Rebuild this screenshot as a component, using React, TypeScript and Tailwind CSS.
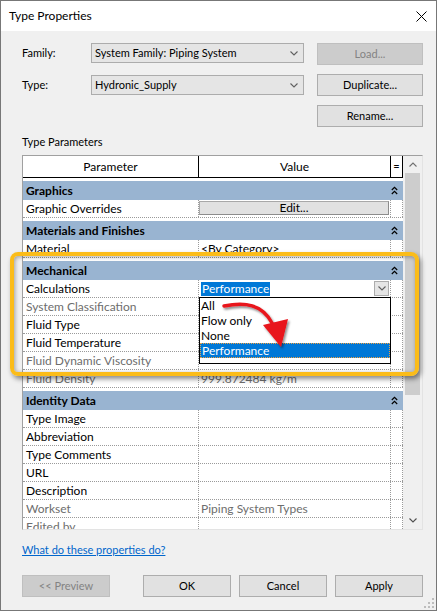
import React from 'react';

// Windows-style "Type Properties" dialog with the Calculations dropdown open

type Row = {
  label: string;
  value?: React.ReactNode;
  muted?: boolean;
};

type Section = {
  title: string;
  rows: Row[];
};

const Chevron: React.FC<{ up?: boolean; color?: string }> = ({ up, color = '#606060' }) => (
  <svg width="8" height="5" viewBox="0 0 8 5">
    <path
      d={up ? 'M0.5 4.5 L4 1 L7.5 4.5' : 'M0.5 0.5 L4 4 L7.5 0.5'}
      fill="none"
      stroke={color}
      strokeWidth="1.1"
    />
  </svg>
);

const DoubleChevron: React.FC = () => (
  <svg width="7" height="9" viewBox="0 0 7 9">
    <path d="M0.8 4 L3.5 1.3 L6.2 4 M0.8 8 L3.5 5.3 L6.2 8" fill="none" stroke="#000" strokeWidth="1.2" />
  </svg>
);

const Combo: React.FC<{ value: string }> = ({ value }) => (
  <div className="w-[213px] h-[20px] border border-[#acacac] bg-[#e5e5e5] flex items-center justify-between pl-[3px] pr-[5px] text-[11px]">
    <span>{value}</span>
    <Chevron />
  </div>
);

const DlgButton: React.FC<{ label: string; disabled?: boolean; className?: string }> = ({ label, disabled, className }) => (
  <div
    className={
      'h-[22px] w-[106px] border flex items-center justify-center text-[11px] ' +
      (disabled ? 'bg-[#cccccc] border-[#bfbfbf] text-[#838383] ' : 'bg-[#e1e1e1] border-[#adadad] text-black ') +
      (className ?? '')
    }
  >
    {label}
  </div>
);

const sections: Section[] = [
  {
    title: 'Graphics',
    rows: [
      {
        label: 'Graphic Overrides',
        value: (
          <div className="w-full h-full pt-[1px] pr-[1px] pb-[2px]">
            <div className="h-full bg-[#e1e1e1] border border-[#a8a8a8] border-r-[#8c8c8c] border-b-[#8c8c8c] flex items-center justify-center text-[12px]">
              Edit...
            </div>
          </div>
        ),
      },
    ],
  },
  {
    title: 'Materials and Finishes',
    rows: [{ label: 'Material', value: <span className="pl-[2px]">&lt;By Category&gt;</span> }],
  },
  {
    title: 'Mechanical',
    rows: [
      {
        label: 'Calculations',
        value: (
          <div className="w-full h-full flex items-center justify-between pl-[2px] pr-[1px]">
            <span className="bg-[#0078d7] text-white leading-[14px] px-[1px]">Performance</span>
            <div className="w-[15px] h-[15px] border border-[#acacac] bg-[#e5e5e5] flex items-center justify-center">
              <Chevron />
            </div>
          </div>
        ),
      },
      { label: 'System Classification', muted: true },
      { label: 'Fluid Type' },
      { label: 'Fluid Temperature' },
      { label: 'Fluid Dynamic Viscosity', muted: true },
      {
        label: 'Fluid Density',
        muted: true,
        value: <span className="pl-[2px] text-[#6d6d6d]">999.872484 kg/m</span>,
      },
    ],
  },
  {
    title: 'Identity Data',
    rows: [
      { label: 'Type Image' },
      { label: 'Abbreviation' },
      { label: 'Type Comments' },
      { label: 'URL' },
      { label: 'Description' },
      { label: 'Workset', muted: true, value: <span className="pl-[2px] text-[#6d6d6d]">Piping System Types</span> },
      { label: 'Edited by', muted: true },
    ],
  },
];

const dropdownItems = ['All', 'Flow only', 'None', 'Performance'];

export default function App() {
  return (
    <div
      className="relative w-[437px] h-[611px] border border-[#777777] bg-[#f0f0f0] flex flex-col text-black overflow-hidden"
      style={{ fontFamily: 'Lato, "Noto Sans", sans-serif' }}
    >
      {/* Title bar */}
      <div className="h-[30px] bg-white flex items-center justify-between pl-[8px] pr-[9px]">
        <span className="text-[12px]">Type Properties</span>
        <svg width="11" height="11" viewBox="0 0 11 11">
          <path d="M0.5 0.5 L10.5 10.5 M10.5 0.5 L0.5 10.5" stroke="#000" strokeWidth="1" />
        </svg>
      </div>

      {/* Body */}
      <div className="flex-1 flex flex-col pl-[21px] pr-[13px]">
        <div className="mt-[12px] flex items-start">
          <div className="w-[69px] h-[20px] flex items-center text-[11px]">Family:</div>
          <Combo value="System Family: Piping System" />
          <DlgButton label="Load..." disabled className="ml-auto" />
        </div>
        <div className="mt-[9px] flex items-start">
          <div className="w-[69px] h-[22px] flex items-center text-[11px]">Type:</div>
          <div className="mt-[1px]">
            <Combo value="Hydronic_Supply" />
          </div>
          <DlgButton label="Duplicate..." className="ml-auto" />
        </div>
        <div className="mt-[9px] flex justify-end">
          <DlgButton label="Rename..." />
        </div>
        <div className="mt-[7px] h-[16px] flex items-center text-[11px]">Type Parameters</div>

        {/* Parameter grid */}
        <div className="mt-[5px] h-[375px] w-[401px] border border-[#a0a0a0] border-r-[#e3e3e3] border-b-[#e3e3e3] flex overflow-hidden">
          <div className="w-[380px] h-full bg-white overflow-hidden text-[12px]">
            <div className="h-[22px] flex border-b border-black">
              <div className="w-[176px] border-r border-black flex items-center justify-center">Parameter</div>
              <div className="w-[192px] border-r border-black flex items-center justify-center">Value</div>
              <div className="w-[12px] border-r border-black flex items-center justify-center text-[11px]">=</div>
            </div>
            {sections.map((section) => (
              <div key={section.title}>
                <div className="h-[3px] bg-white" />
                <div className="h-[19px] bg-[#99b4d1] flex items-center">
                  <span className="flex-1 pl-[3px] font-bold">{section.title}</span>
                  <div className="w-[12px] flex justify-start">
                    <DoubleChevron />
                  </div>
                </div>
                {section.rows.map((row) => (
                  <div key={row.label} className="h-[18px] flex border-b border-dotted border-[#9a9a9a]">
                    <div
                      className={
                        'w-[176px] pl-[3px] flex items-center border-r border-dotted border-[#9a9a9a] whitespace-nowrap ' +
                        (row.muted ? 'text-[#6d6d6d]' : 'text-black')
                      }
                    >
                      {row.label}
                    </div>
                    <div className="w-[192px] flex items-center border-r border-dotted border-[#9a9a9a] whitespace-nowrap">
                      {row.value}
                    </div>
                    <div className="w-[12px] border-r border-dotted border-[#9a9a9a]" />
                  </div>
                ))}
              </div>
            ))}
          </div>

          {/* Scrollbar */}
          <div className="w-[19px] h-full bg-[#f0f0f0] flex flex-col items-center">
            <div className="h-[17px] w-full flex items-center justify-center">
              <Chevron up color="#707070" />
            </div>
            <div className="w-[15px] h-[222px] bg-[#cdcdcd]" />
            <div className="flex-1" />
            <div className="h-[17px] w-full flex items-center justify-center">
              <Chevron color="#505050" />
            </div>
          </div>
        </div>

        <div className="mt-[12px] h-[16px] flex items-center text-[11px]">
          <span className="text-[#0066cc] underline">What do these properties do?</span>
        </div>

        <div className="mt-[17px] flex">
          <DlgButton label="<< Preview" disabled className="w-[88px]" />
          <DlgButton label="OK" className="w-[88px] ml-[33px]" />
          <DlgButton label="Cancel" className="w-[88px] ml-[8px]" />
          <DlgButton label="Apply" className="w-[88px] ml-[8px]" />
        </div>
      </div>

      {/* Open dropdown list of the Calculations value */}
      <div className="absolute left-[198px] top-[296px] w-[192px] h-[67px] bg-white border border-black text-[12px]">
        {dropdownItems.map((item) => (
          <div
            key={item}
            className={
              'h-[15px] flex items-center pl-[1px] ' +
              (item === 'Performance' ? 'bg-[#0078d7] text-white border border-dotted border-[#f0a040]' : '')
            }
          >
            {item}
          </div>
        ))}
      </div>

      {/* Yellow callout */}
      <div className="absolute left-[9px] top-[251px] w-[409px] h-[124px] border-4 border-[#fbbc19] rounded-[8px] shadow-[2px_3px_5px_rgba(0,0,0,0.45),inset_1px_1px_4px_rgba(0,0,0,0.35)] pointer-events-none" />

      {/* Red arrow */}
      <svg className="absolute left-0 top-0 pointer-events-none" width="435" height="609" viewBox="1 1 435 609">
        <defs>
          <filter id="arrowShadow" x="-20%" y="-20%" width="160%" height="160%">
            <feDropShadow dx="1.5" dy="2" stdDeviation="1.2" floodColor="#000" floodOpacity="0.45" />
          </filter>
        </defs>
        <g filter="url(#arrowShadow)">
          <path d="M224 306 C 245 302, 262 304, 272 323" fill="none" stroke="#e8141b" strokeWidth="3.4" strokeLinecap="round" />
          <polygon points="263,325 288,319 281,347" fill="#e8141b" />
        </g>
      </svg>

      {/* Resize grip */}
      <svg className="absolute right-[2px] bottom-[2px]" width="10" height="10" viewBox="0 0 10 10">
        {[
          [8, 0],
          [8, 4],
          [4, 4],
          [8, 8],
          [4, 8],
          [0, 8],
        ].map(([x, y]) => (
          <rect key={`${x}-${y}`} x={x} y={y} width="2" height="2" fill="#bdbdbd" />
        ))}
      </svg>
    </div>
  );
}
